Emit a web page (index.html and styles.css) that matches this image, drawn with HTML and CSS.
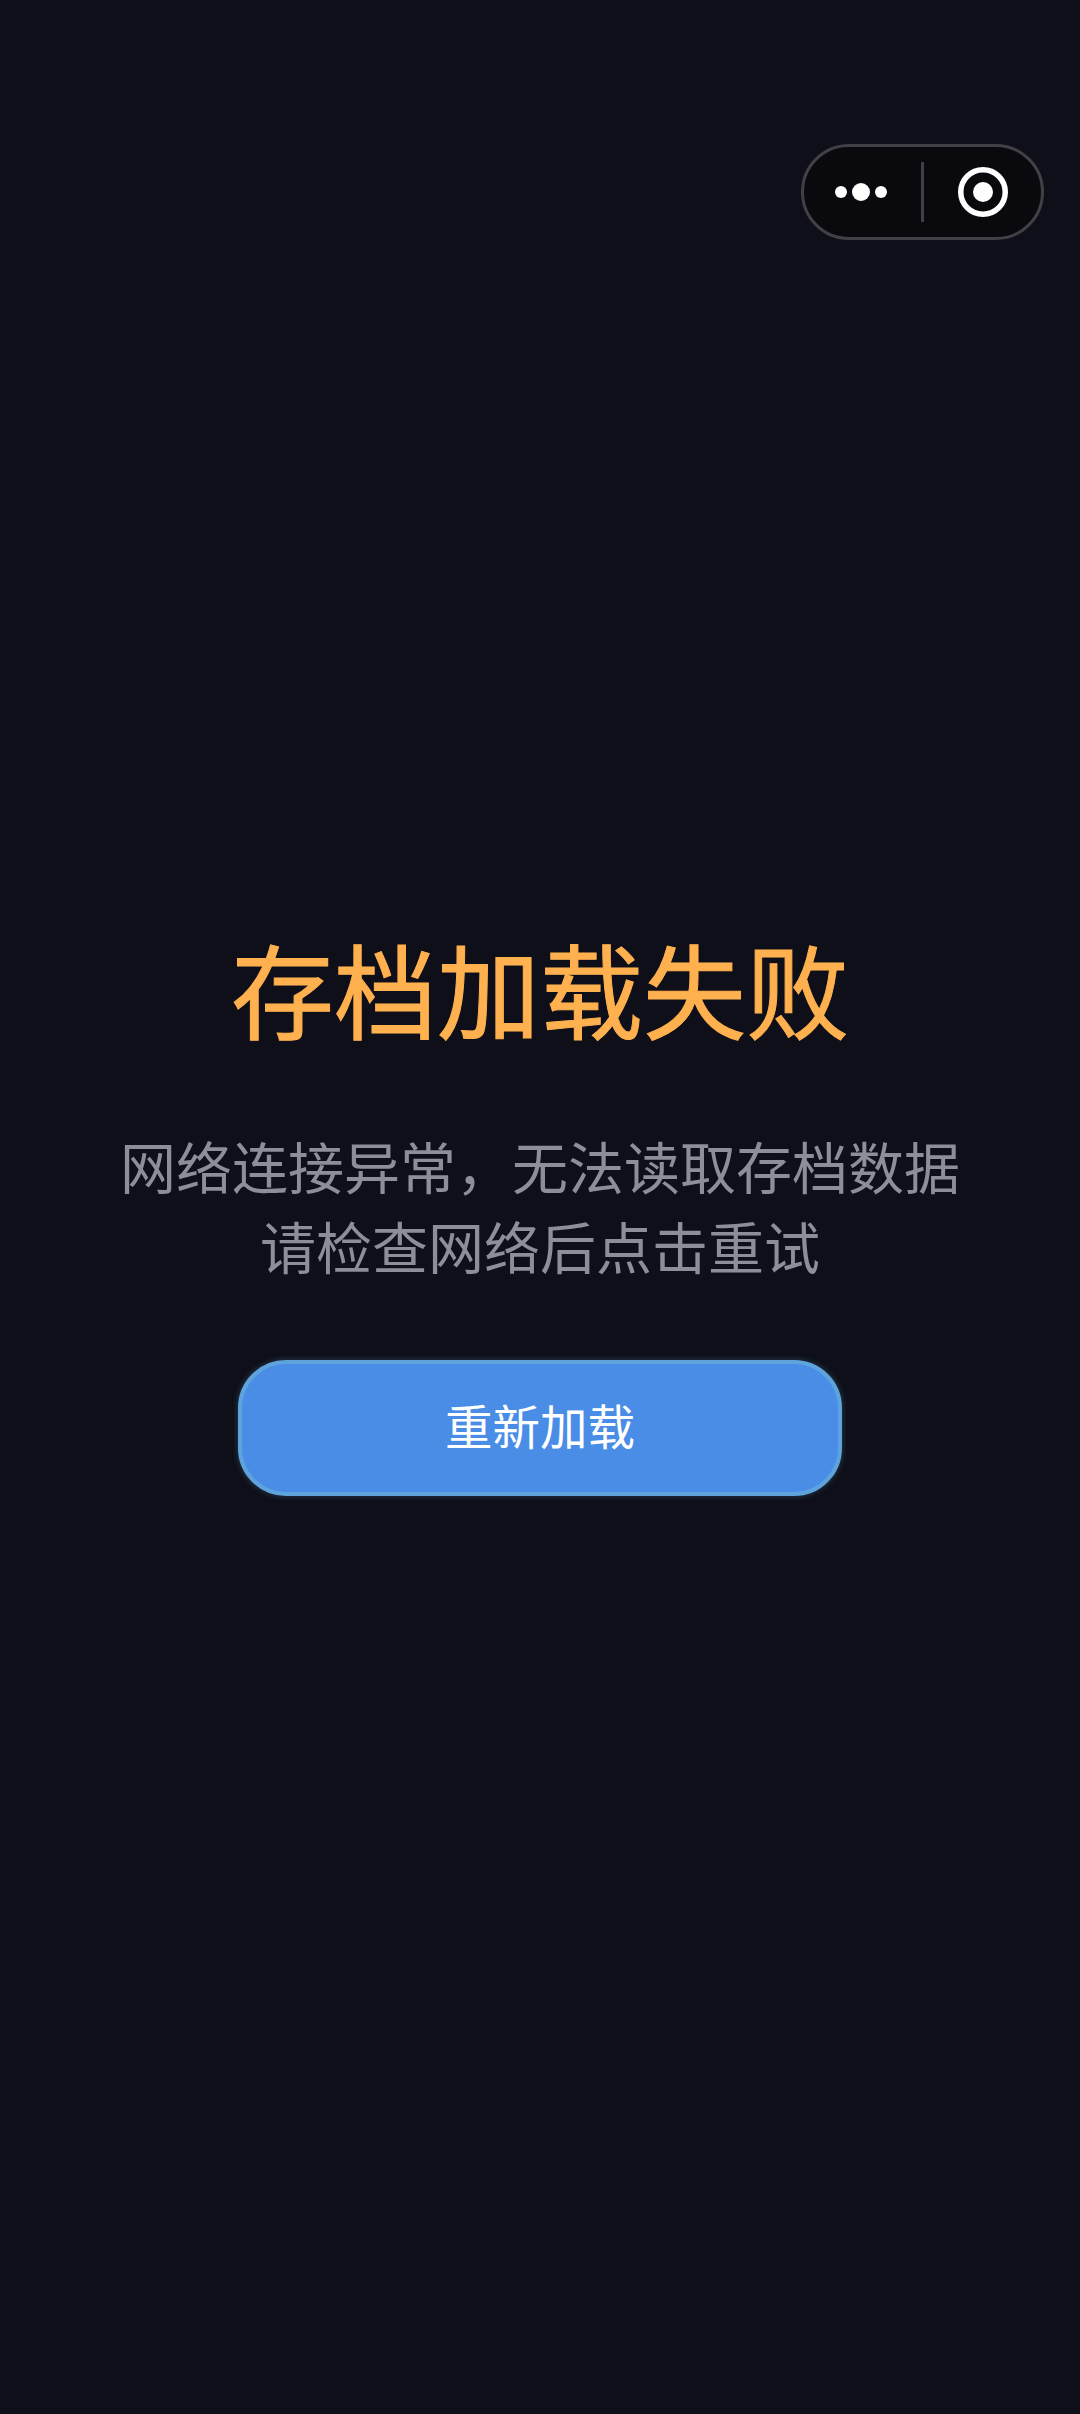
FILE: index.html
```html
<!DOCTYPE html>
<html lang="zh-CN">
<head>
<meta charset="utf-8">
<title>存档加载失败</title>
<link rel="stylesheet" href="styles.css">
</head>
<body>
<header class="topbar">
  <div class="capsule">
    <div class="capsule-side capsule-dots">
      <span class="dot"></span><span class="dot dot-big"></span><span class="dot"></span>
    </div>
    <div class="capsule-divider"></div>
    <div class="capsule-side">
      <svg class="target" width="50" height="50" viewBox="0 0 50 50" aria-hidden="true">
        <circle cx="25" cy="25" r="22.25" fill="none" stroke="#fff" stroke-width="5.5"/>
        <circle cx="25" cy="25" r="10" fill="#fff"/>
      </svg>
    </div>
  </div>
</header>
<main class="error">
  <h1 class="error-title">存档加载失败</h1>
  <p class="error-text">网络连接异常，无法读取存档数据<br>请检查网络后点击重试</p>
  <button class="retry" type="button">重新加载</button>
</main>
</body>
</html>
```
FILE: styles.css
```css
* { box-sizing: border-box; }
html, body { margin: 0; height: 100%; }
body {
  background: #0e0f18;
  font-family: "Noto Sans CJK SC", "Noto Sans", sans-serif;
  display: flex;
  flex-direction: column;
  overflow: hidden;
}
.topbar {
  display: flex;
  justify-content: flex-end;
  padding: 144px 36px 0 0;
}
.capsule {
  width: 243px;
  height: 96px;
  border: 3px solid #404046;
  border-radius: 48px;
  background: #0a0a0e;
  display: flex;
  align-items: center;
}
.capsule-side {
  flex: 1;
  display: flex;
  align-items: center;
  justify-content: center;
  gap: 5px;
}
.capsule-dots {
  flex: 0 0 117px;
  padding-right: 3px;
}
.dot {
  width: 12px;
  height: 12px;
  border-radius: 50%;
  background: #fff;
}
.dot-big { width: 18px; height: 18px; }
.capsule-divider {
  width: 3px;
  height: 60px;
  background: #404046;
}
.target { display: block; }
.error {
  display: flex;
  flex-direction: column;
  align-items: center;
  margin-top: 684px;
}
.error-title {
  margin: 0;
  font-size: 103px;
  line-height: 128px;
  font-weight: 400;
  color: #ffb04f;
  -webkit-text-stroke: 1px #ffb04f;
}
.error-text {
  margin: 73px 0 0;
  font-size: 56px;
  line-height: 80px;
  text-align: center;
  color: #8e8e9a;
}
.retry {
  margin-top: 75px;
  width: 604px;
  height: 136px;
  border: 4px solid #5fa3dc;
  border-radius: 48px;
  background: #4a8de6;
  box-shadow: 0 0 6px rgba(95, 163, 220, 0.35);
  color: #fff;
  font-family: inherit;
  font-size: 47.5px;
  padding: 0 0 8px;
}
```
